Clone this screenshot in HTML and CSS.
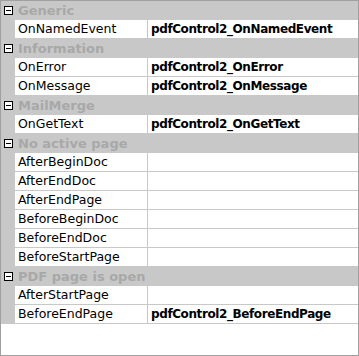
FILE: index.html
```html
<!DOCTYPE html>
<html lang="en">
<head>
    <meta charset="UTF-8">
    <title>Event properties</title>
    <link rel="stylesheet" href="styles.css">
</head>
<body>

    <div class="grid">
        <div class="cat"><span class="toggle"></span><span class="cat-name">Generic</span></div>
        <div class="prop"><span class="name">OnNamedEvent</span><span class="value">pdfControl2_OnNamedEvent</span></div>

        <div class="cat"><span class="toggle"></span><span class="cat-name">Information</span></div>
        <div class="prop"><span class="name">OnError</span><span class="value">pdfControl2_OnError</span></div>
        <div class="prop"><span class="name">OnMessage</span><span class="value">pdfControl2_OnMessage</span></div>

        <div class="cat"><span class="toggle"></span><span class="cat-name">MailMerge</span></div>
        <div class="prop"><span class="name">OnGetText</span><span class="value">pdfControl2_OnGetText</span></div>

        <div class="cat"><span class="toggle"></span><span class="cat-name">No active page</span></div>
        <div class="prop"><span class="name">AfterBeginDoc</span><span class="value"></span></div>
        <div class="prop"><span class="name">AfterEndDoc</span><span class="value"></span></div>
        <div class="prop"><span class="name">AfterEndPage</span><span class="value"></span></div>
        <div class="prop"><span class="name">BeforeBeginDoc</span><span class="value"></span></div>
        <div class="prop"><span class="name">BeforeEndDoc</span><span class="value"></span></div>
        <div class="prop"><span class="name">BeforeStartPage</span><span class="value"></span></div>

        <div class="cat"><span class="toggle"></span><span class="cat-name">PDF page is open</span></div>
        <div class="prop"><span class="name">AfterStartPage</span><span class="value"></span></div>
        <div class="prop"><span class="name">BeforeEndPage</span><span class="value">pdfControl2_BeforeEndPage</span></div>
    </div>

</body>
</html>
```

FILE: styles.css
```css
body {
    margin: 0;
    font-family: "DejaVu Sans", Tahoma, sans-serif;
    font-size: 12px;
}
.grid {
    width: 357px;
    height: 354px;
    border: 1px solid #a0a0a0;
    background: #fff;
}
.cat {
    display: flex;
    align-items: center;
    height: 18px;
    border-bottom: 1px solid #c8c8c8;
    background: #c8c8c8;
}
.toggle {
    position: relative;
    width: 7px;
    height: 7px;
    margin: 0 5px 0 3px;
    border: 1px solid #000;
    background: #fff;
}
.toggle::after {
    content: "";
    position: absolute;
    left: 1px;
    top: 3px;
    width: 5px;
    height: 1px;
    background: #000;
}
.cat-name {
    font-size: 13px;
    font-weight: bold;
    color: #a8a8a8;
}
.prop {
    display: flex;
    height: 18px;
    border-bottom: 1px solid #c8c8c8;
    border-left: 14px solid #c8c8c8;
    line-height: 18px;
}
.name {
    width: 129px;
    padding-left: 3px;
    font-size: 12.5px;
    border-right: 1px solid #c8c8c8;
}
.value {
    flex: 1;
    padding-left: 3px;
    font-weight: bold;
    letter-spacing: -0.4px;
}
```
